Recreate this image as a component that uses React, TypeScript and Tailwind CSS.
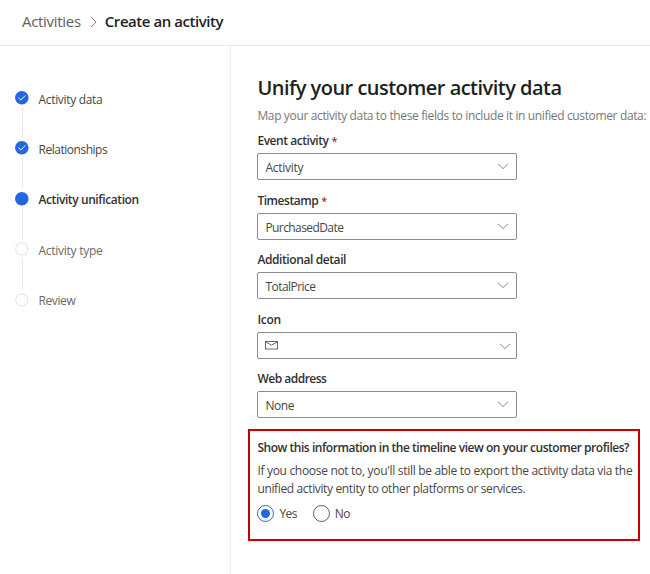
import React from "react";

type StepState = "done" | "current" | "todo";

const steps: { label: string; state: StepState; tracking: string }[] = [
  { label: "Activity data", state: "done", tracking: "tracking-[-0.32px]" },
  { label: "Relationships", state: "done", tracking: "tracking-[-0.48px]" },
  { label: "Activity unification", state: "current", tracking: "tracking-[-0.4px]" },
  { label: "Activity type", state: "todo", tracking: "tracking-[-0.26px]" },
  { label: "Review", state: "todo", tracking: "tracking-[-0.4px]" },
];

function StepMarker({ state }: { state: StepState }) {
  return (
    <svg width="14" height="14" viewBox="0 0 14 14" className="block shrink-0">
      {state === "todo" ? (
        <circle cx="6.8" cy="6.8" r="6.1" fill="#fff" stroke="#e8e8e8" strokeWidth="1.2" />
      ) : (
        <circle cx="6.8" cy="6.8" r="6.8" fill="#2266e3" />
      )}
      {state === "done" && (
        <path d="M3.3 6.7 L5.8 9 L10.3 4.5" fill="none" stroke="#fff" strokeWidth="1" />
      )}
    </svg>
  );
}

function Chevron() {
  return (
    <svg width="12" height="7" viewBox="0 0 12 7" className="block">
      <path d="M1 0.8 L6 5.6 L11 0.8" fill="none" stroke="#8a8886" strokeWidth="1" />
    </svg>
  );
}

function Mail() {
  return (
    <svg width="13" height="9" viewBox="0 0 13 9" className="block">
      <rect x="0.5" y="0.5" width="12" height="7.5" fill="none" stroke="#6b6664" strokeWidth="1" />
      <path d="M0.8 1 L6.5 4.2 L12.2 1" fill="none" stroke="#55504e" strokeWidth="0.9" />
    </svg>
  );
}

type FieldProps = {
  label: string;
  value?: string;
  required?: boolean;
  height: string;
  labelTracking: string;
  tracking?: string;
};

function Field({ label, value, required, height, labelTracking, tracking = "" }: FieldProps) {
  return (
    <div className={`flex flex-col ${height}`}>
      <div className={`h-5 text-[12px] leading-[16px] font-semibold text-[#323130] ${labelTracking}`}>
        {label}
        {required && <span className="ml-[3px] text-[11px] text-[#b4262c]">*</span>}
      </div>
      <div className="flex h-[27px] w-[260px] items-center justify-between rounded-[2px] border border-[#8f8d8b] pl-[7px] pr-[6px]">
        {value ? (
          <span className={`pt-[2px] text-[12px] leading-4 text-[#484644] ${tracking}`}>{value}</span>
        ) : (
          <Mail />
        )}
        <span className={value ? "mr-px" : "mt-px -mr-px"}>
          <Chevron />
        </span>
      </div>
    </div>
  );
}

function Radio({ label, checked }: { label: string; checked?: boolean }) {
  return (
    <div className="flex items-center gap-[5px]">
      <svg width="17" height="17" viewBox="0 0 17 17" className="block">
        <circle cx="8.5" cy="8.5" r="8" fill="#fff" stroke={checked ? "#2266e3" : "#605e5c"} strokeWidth="1" />
        {checked && <circle cx="8.5" cy="8.5" r="4.5" fill="#2266e3" />}
      </svg>
      <span className="pt-px text-[12px] leading-4 tracking-[-0.6px] text-[#484644]">{label}</span>
    </div>
  );
}

export default function App() {
  return (
    <div className="flex h-[574px] w-[650px] flex-col overflow-hidden whitespace-nowrap bg-white font-['Open_Sans',sans-serif]">
      <header className="flex h-[46px] shrink-0 items-center border-b border-[#e6e6e6] pl-[22px] pb-[2px] text-[15px]">
        <span className="tracking-[-0.3px] text-[#605e5c]">Activities</span>
        <svg width="7" height="12" viewBox="0 0 7 12" className="ml-[9px] mr-[8px] block">
          <path d="M1 1 L6 6 L1 11" fill="none" stroke="#8a8886" strokeWidth="1" />
        </svg>
        <span className="font-semibold tracking-[-0.45px] text-[#201f1e]">Create an activity</span>
      </header>

      <div className="flex min-h-0 flex-1">
        <nav className="w-[231px] shrink-0 border-r border-[#efefef] pl-[15px] pt-[45px]">
          {steps.map((step, i) => (
            <div key={step.label} className="flex h-[50.4px] gap-[9.5px]">
              <div className="flex w-[14px] flex-col items-center">
                <StepMarker state={step.state} />
                {i < steps.length - 1 && <div className="mt-[3px] h-[30px] w-px bg-[#e6e6e6]" />}
              </div>
              <span
                className={`pt-[0.6px] text-[12px] leading-[16px] ${step.tracking} ${
                  step.state === "current"
                    ? "font-semibold text-[#323130]"
                    : step.state === "done"
                      ? "text-[#484644]"
                      : "text-[#6b6967]"
                }`}
              >
                {step.label}
              </span>
            </div>
          ))}
        </nav>

        <main className="pl-[17px] pt-[29px]">
          <div className="pl-[9.4px]">
            <h1 className="h-[33px] text-[20px] leading-[26px] font-semibold tracking-[-0.52px] text-[#201f1e]">
              Unify your customer activity data
            </h1>
            <p className="h-[25px] text-[12px] leading-[16px] tracking-[-0.36px] text-[#797775]">
              Map your activity data to these fields to include it in unified customer data:
            </p>
            <Field label="Event activity" value="Activity" required height="h-[60px]" labelTracking="tracking-[-0.45px]" tracking="tracking-[-0.25px]" />
            <Field label="Timestamp" value="PurchasedDate" required height="h-[59px]" labelTracking="tracking-[-0.46px]" tracking="tracking-[-0.58px]" />
            <Field label="Additional detail" value="TotalPrice" height="h-[60px]" labelTracking="tracking-[-0.4px]" tracking="tracking-[-0.54px]" />
            <Field label="Icon" height="h-[59px]" labelTracking="tracking-[-0.3px]" />
            <Field label="Web address" value="None" height="h-[58px]" labelTracking="tracking-[-0.5px]" tracking="tracking-[-0.4px]" />
          </div>

          <section className="h-[112px] w-[392px] border-2 border-[#c80000] pl-[7.4px] pt-[9px]">
            <h2 className="text-[12px] leading-4 font-semibold tracking-[-0.46px] text-[#323130]">
              Show this information in the timeline view on your customer profiles?
            </h2>
            <p className="mt-[6px] text-[12px] leading-[18px] tracking-[-0.36px] text-[#484644]">
              <span className="tracking-[-0.31px]">
                If you choose not to, you'll still be able to export the activity data via the
              </span>
              <br />
              unified activity entity to other platforms or services.
            </p>
            <div className="mt-[7px] flex gap-4">
              <Radio label="Yes" checked />
              <Radio label="No" />
            </div>
          </section>
        </main>
      </div>
    </div>
  );
}
